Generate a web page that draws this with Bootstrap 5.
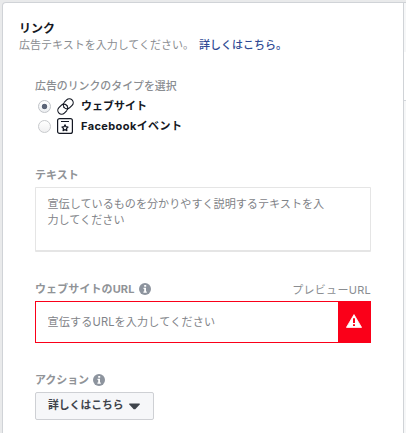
<!DOCTYPE html>
<html lang="ja">
<head>
<meta charset="utf-8">
<meta name="viewport" content="width=device-width, initial-scale=1">
<title>リンク</title>
<link rel="stylesheet" href="https://cdn.jsdelivr.net/npm/bootstrap@5.3.0/dist/css/bootstrap.min.css">
<style>
html, body { height: 100%; }
body { background: #e9eaeb; font-family: Inter, "Noto Sans CJK JP", sans-serif; font-size: 11px; line-height: 16px; color: #8a8d91; overflow: hidden; white-space: nowrap; }
.page-shell { height: 433px; padding: 2px 0 0 2px; }
.panel { width: 402px; border: 1px solid #d0d3d7; border-bottom: 0; border-radius: 4px 0 0 0; background: #fff; padding: 17px 16px 0; }
.side { width: 2px; border-top: 1px solid #d0d3d7; }
.side-head { height: 49px; background: #f6f7f8; }
.side-mid { height: 49px; border-bottom: 1px solid #d3d6db; background: #fff; }
.side-rest { background: #f6f7f8; }
.panel-title { font-size: 12px; line-height: 17px; font-weight: 700; color: #141823; }
.more { color: #2f4a94; font-weight: 500; margin-left: 2px; }
.form-area { width: 336px; margin: 25px 0 0 16px; }
.lbl { font-weight: 700; height: 16px; color: #909397; }
.type-lbl { font-size: 10.9px; font-weight: 500; color: #8a8d91; }
.choice { height: 20px; color: #141823; font-weight: 700; }
.choices { padding: 2px 0 0 3px; }
.choice .form-check-input { width: 13px; height: 13px; margin: 0 6px 0 0; border-color: #c8cacd; background: linear-gradient(#fff, #f0f0f1); box-shadow: none; }
.choice .form-check-input:checked { background: radial-gradient(circle, #5b6477 0 2.4px, transparent 3.1px), linear-gradient(#fff, #eceef1); border-color: #c0c3c8; }
.choice svg { margin-right: 7px; }
.latin { letter-spacing: .4px; }
.text-block { margin-top: 31px; }
.ad-text { height: 65px; margin-top: 4px; padding: 8px 40px 0 11.5px; border: 1px solid #e5e5e5; border-bottom-width: 2px; border-radius: 1px; font-size: 11.1px; line-height: 16px; color: #7f8388; resize: none; overflow: hidden; font-family: inherit; }
.ad-text::placeholder, .url-input::placeholder { color: #7f8388; opacity: 1; }
.url-block { margin-top: 29px; }
.url-lbl { letter-spacing: .1px; }
.preview { letter-spacing: .28px; padding-top: 4px; }
.url-group { height: 42px; margin-top: 4px; border: 1px solid #fa0019; }
.url-input { border: 0; border-radius: 0; padding: 0 11.5px; font-size: 11.1px; line-height: 16px; letter-spacing: .15px; font-family: inherit; }
.url-alert { width: 33px; border: 0; border-radius: 0; background: #fa0019; padding: 0 0 3px 1px; }
.action-block { margin-top: 29px; }
.action-lbl { letter-spacing: -.1px; }
.action-btn { width: 119px; height: 28px; margin-top: 4px; padding: 0 13px 0 12px; background: #f6f7f9; border: 1px solid #ced0d4; border-radius: 2px; font-size: 10.8px; line-height: 16px; font-weight: 700; color: #3f444b; font-family: inherit; }
.action-btn:hover { background: #e9ebee; }
</style>
<script src="https://cdn.jsdelivr.net/npm/bootstrap@5.3.0/dist/js/bootstrap.bundle.min.js"></script>
</head>
<body>
<div class="page-shell d-flex">
  <main class="panel flex-shrink-0">
    <h1 class="panel-title mb-0">リンク</h1>
    <p class="mb-0">広告テキストを入力してください。 <a href="#" class="more text-decoration-none">詳しくはこちら。</a></p>
    <form class="form-area">
      <div class="lbl type-lbl">広告のリンクのタイプを選択</div>
      <div class="choices">
        <label class="choice d-flex align-items-center">
          <input class="form-check-input" type="radio" name="type" checked>
          <svg width="17" height="17" viewBox="1 1 22 22" fill="none" stroke="#141823" stroke-width="1.500" stroke-linecap="round"><path d="M10 13a5 5 0 0 0 7.540.540l3-3a5 5 0 0 0-7.070-7.070l-3.200 3.200"/><path d="M14 11a5 5 0 0 0-7.540-.540l-3 3a5 5 0 0 0 7.070 7.070l3.200-3.200"/><path d="M10 13a5 5 0 0 1-.5-4.800M14 11a5 5 0 0 1 .5 4.800"/></svg>
          ウェブサイト
        </label>
        <label class="choice d-flex align-items-center">
          <input class="form-check-input" type="radio" name="type">
          <svg width="17" height="16" viewBox="0 0 17 16" fill="none" stroke="#141823"><rect x=".6" y=".6" width="14.800" height="14.800" rx="2" stroke-width="1.200"/><path d="M4 3.500h8"/><path d="m8 6.800.9 1.900 2.100.3-1.500 1.500.4 2.100L8 11.600l-1.900 1 .4-2.100L5 9l2.100-.3z" stroke-width="1.200" stroke-linejoin="round"/></svg>
          <span class="latin">Facebookイベント</span>
        </label>
      </div>
      <div class="text-block">
        <label class="lbl d-block" for="adText">テキスト</label>
        <textarea id="adText" class="form-control ad-text shadow-none" placeholder="宣伝しているものを分かりやすく説明するテキストを入力してください"></textarea>
      </div>
      <div class="url-block">
        <div class="d-flex justify-content-between">
          <label class="lbl url-lbl d-flex align-items-center" for="adUrl">ウェブサイトのURL
            <svg class="ms-1" width="12" height="12" viewBox="0 0 12 12"><circle cx="6" cy="6" r="6" fill="#8d949e"/><path d="M5.200 2h2v1.700h-2zM4.500 4.800H7v3.700h.8v1.200H4.400V8.500h.8V6h-.7z" fill="#fff"/></svg>
          </label>
          <span class="preview lh-1">プレビューURL</span>
        </div>
        <div class="url-group input-group flex-nowrap">
          <input id="adUrl" type="text" class="form-control url-input shadow-none" placeholder="宣伝するURLを入力してください">
          <span class="input-group-text url-alert justify-content-center">
            <svg width="16" height="14" viewBox="0 0 16 14"><path d="M8 .6 15.600 13.400H.4z" fill="#fff" stroke="#fff" stroke-width=".8" stroke-linejoin="round"/><path d="M7 4.200h2v4.800H7zM7 10.200h2v1.800H7z" fill="#fa0019"/></svg>
          </span>
        </div>
      </div>
      <div class="action-block">
        <div class="lbl action-lbl d-flex align-items-center">アクション
          <svg class="ms-1" width="12" height="12" viewBox="0 0 12 12"><circle cx="6" cy="6" r="6" fill="#8d949e"/><path d="M5.200 2h2v1.700h-2zM4.500 4.800H7v3.700h.8v1.200H4.400V8.500h.8V6h-.7z" fill="#fff"/></svg>
        </div>
        <button type="button" class="btn action-btn d-flex align-items-center justify-content-between">詳しくはこちら
          <svg width="11" height="7" viewBox="0 0 11 7"><path d="M.3.500h10.400v1L6.300 6.300H4.700L.3 1.500z" fill="#3f444b"/></svg>
        </button>
      </div>
    </form>
  </main>
  <aside class="side d-flex flex-column">
    <div class="side-head flex-shrink-0"></div>
    <div class="side-mid flex-shrink-0"></div>
    <div class="side-rest flex-grow-1"></div>
  </aside>
</div>
</body>
</html>
